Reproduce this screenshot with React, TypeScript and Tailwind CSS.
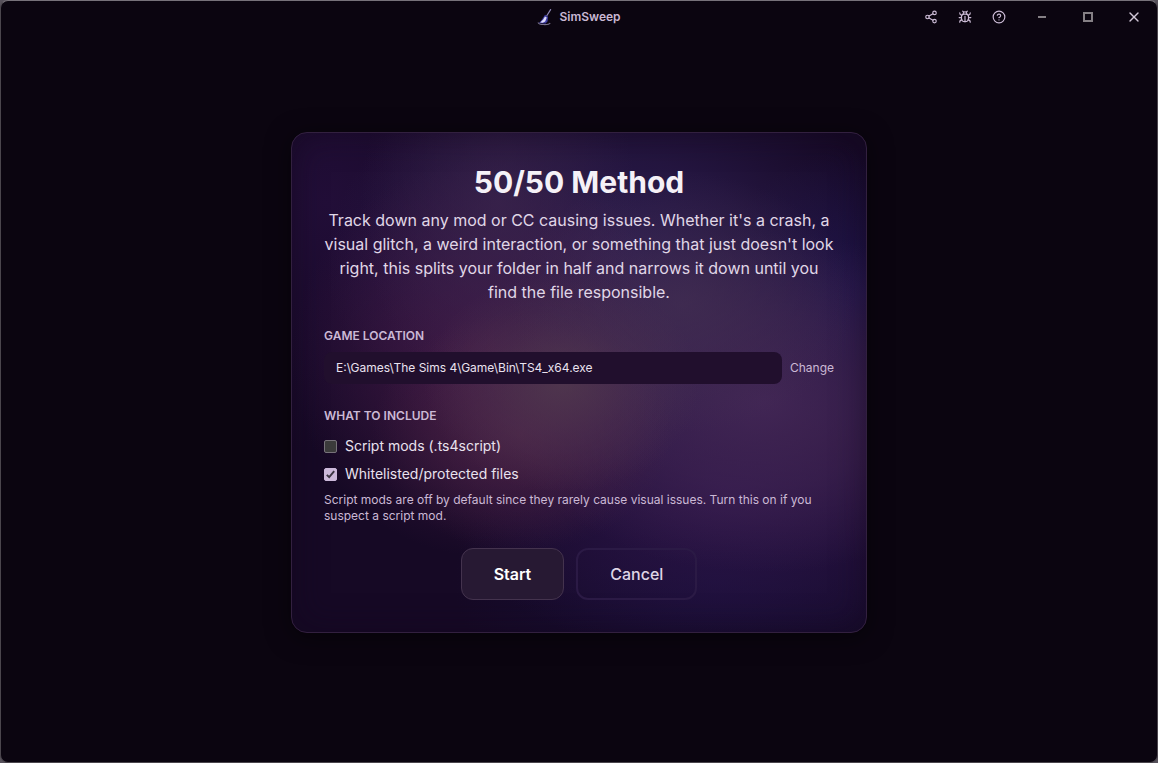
import { useState } from "react";
import { Bug, Share2, CircleQuestionMark, X } from "lucide-react";

function BroomLogo() {
  return (
    <svg viewBox="0 0 16 18" className="h-[18px] w-4" aria-hidden="true">
      <path d="M13.6 1.6 9.6 8" stroke="#8d86b4" strokeWidth="1.2" strokeLinecap="round" />
      <path d="M8 6.8 11 8.8 10.6 13.2 8.6 15.6 1.8 15.2 5 11.4Z" fill="#3c3aa0" />
      <path d="M8 8.4 9.8 9.6 8.2 13.6 5.8 14.8 3.2 14.6 6.2 11.6Z" fill="#dedcfa" />
      <path d="M1.2 14.4c-.6 2.6 10.8 3 12 .6" stroke="#77708a" strokeWidth="1.1" fill="none" />
    </svg>
  );
}

function TitleBar() {
  const tool = "flex h-8 w-[34px] items-center justify-center text-[#ccbcd6]";
  const win = "flex h-8 w-[46px] items-center justify-center";
  return (
    <header className="grid grid-cols-[1fr_auto_1fr] items-center">
      <span />
      <div className="flex items-center gap-1.5 text-xs font-semibold text-[#c9b8d3]">
        <BroomLogo />
        <span>SimSweep</span>
      </div>
      <div className="flex items-center justify-end">
        <button aria-label="Share" className={tool}><Share2 size={14} /></button>
        <button aria-label="Report a bug" className={tool}><Bug size={14} /></button>
        <button aria-label="Help" className={tool}><CircleQuestionMark size={14} /></button>
        <div className="ml-[3px] flex items-center">
          <button aria-label="Minimize" className={win}><span className="h-0.5 w-2 bg-[#858085]" /></button>
          <button aria-label="Maximize" className={win}><span className="size-2.5 border-2 border-[#858085]" /></button>
          <button aria-label="Close" className={`${win} text-[#d2c8d8]`}><X size={16} /></button>
        </div>
      </div>
    </header>
  );
}

function Option({ label, checked, onChange }: { label: string; checked: boolean; onChange: (v: boolean) => void }) {
  return (
    <label className="flex h-5 items-center gap-2 text-[14px] leading-5 text-[#e9e2ee]">
      <span className="relative flex size-[13px]">
        <input
          type="checkbox"
          checked={checked}
          onChange={(e) => onChange(e.target.checked)}
          className="size-[13px] appearance-none rounded-[2px] border border-[#77727a] bg-[#3b3b3b] checked:border-[#ccb9da] checked:bg-[#ccb9da]"
        />
        {checked && (
          <svg viewBox="0 0 13 13" className="pointer-events-none absolute inset-0" aria-hidden="true">
            <path d="M2.8 6.8 5.2 9.2 10.2 3.2" fill="none" stroke="#3b3542" strokeWidth="1.9" />
          </svg>
        )}
      </span>
      {label}
    </label>
  );
}

export default function App() {
  const [scripts, setScripts] = useState(false);
  const [whitelisted, setWhitelisted] = useState(true);
  return (
    <div className="min-h-screen bg-[#57515b] font-[Inter,sans-serif]">
      <div className="flex min-h-screen flex-col rounded-lg border border-[#4b464d] border-t-[#77727a] bg-[#0b0510]">
        <TitleBar />
        <main className="flex flex-1 items-center justify-center px-4 pb-[30px]">
          <section className="w-full max-w-xl rounded-2xl border border-[#32203f] p-8 shadow-[0_4px_24px_rgba(0,0,0,0.5),inset_0_0_32px_rgba(18,8,30,0.55)] bg-[#160925] bg-[radial-gradient(ellipse_24%_22%_at_47%_50%,#50384ee0_0%,#4d345070_50%,#4d345000_100%),radial-gradient(ellipse_26%_24%_at_40%_60%,#522848b0_0%,#52284858_50%,#52284800_100%),radial-gradient(ellipse_30%_26%_at_68%_34%,#443052b0_0%,#44305258_50%,#44305200_100%),radial-gradient(ellipse_24%_40%_at_36%_14%,#3a244cc0_0%,#3a244c60_50%,#3a244c00_100%),radial-gradient(ellipse_46%_34%_at_82%_54%,#432756f0_0%,#43275690_50%,#43275600_100%),radial-gradient(ellipse_34%_40%_at_34%_45%,#441a46f0_0%,#441a4680_50%,#441a4600_100%),radial-gradient(ellipse_50%_42%_at_56%_26%,#2f1f54f0_0%,#2f1f5490_50%,#2f1f5400_100%),radial-gradient(ellipse_26%_30%_at_100%_32%,#1b1247_0%,#1b124700_100%),radial-gradient(ellipse_50%_34%_at_76%_72%,#2d1448f0_0%,#2d144880_50%,#2d144800_100%),radial-gradient(ellipse_46%_30%_at_74%_90%,#180f38_0%,#180f3800_100%),radial-gradient(ellipse_36%_50%_at_6%_14%,#220e38_0%,#220e3800_100%)]">
            <div className="text-center">
              <h1 className="text-[30px] leading-[35px] font-bold text-[#f5f1f7]">50/50 Method</h1>
              <p className="mt-2 text-base leading-6 text-[#e0d7e7]">
                Track down any mod or CC causing issues. Whether it's a crash, a visual glitch, a weird interaction, or
                something that just doesn't look right, this splits your folder in half and narrows it down until you
                find the file responsible.
              </p>
            </div>
            <div className="mt-6">
              <h2 className="text-xs leading-4 font-semibold text-[#cbb9d5]">GAME LOCATION</h2>
              <div className="mt-2 flex items-center gap-2">
                <div className="flex h-8 min-w-0 flex-1 items-center rounded-lg bg-[#210f2d] px-3 text-xs text-[#eae2ef]">
                  E:\Games\The Sims 4\Game\Bin\TS4_x64.exe
                </div>
                <button className="text-xs text-[#cbb9d5]">Change</button>
              </div>
            </div>
            <div className="mt-6">
              <h2 className="text-xs leading-4 font-semibold text-[#cbb9d5]">WHAT TO INCLUDE</h2>
              <div className="mt-3 flex flex-col gap-2">
                <Option label="Script mods (.ts4script)" checked={scripts} onChange={setScripts} />
                <Option label="Whitelisted/protected files" checked={whitelisted} onChange={setWhitelisted} />
              </div>
              <p className="mt-2 text-xs leading-4 text-[#cbb9d5]">
                Script mods are off by default since they rarely cause visual issues. Turn this on if you suspect a
                script mod.
              </p>
            </div>
            <div className="mt-6 flex justify-center gap-3">
              <button className="h-[52px] rounded-xl border border-[#44334e] bg-[#271933] px-8 text-base font-semibold text-white">
                Start
              </button>
              <button className="h-[52px] rounded-xl border-2 border-[#2b1a45] px-8 text-base font-medium text-[#dfd5e6]">
                Cancel
              </button>
            </div>
          </section>
        </main>
      </div>
    </div>
  );
}
